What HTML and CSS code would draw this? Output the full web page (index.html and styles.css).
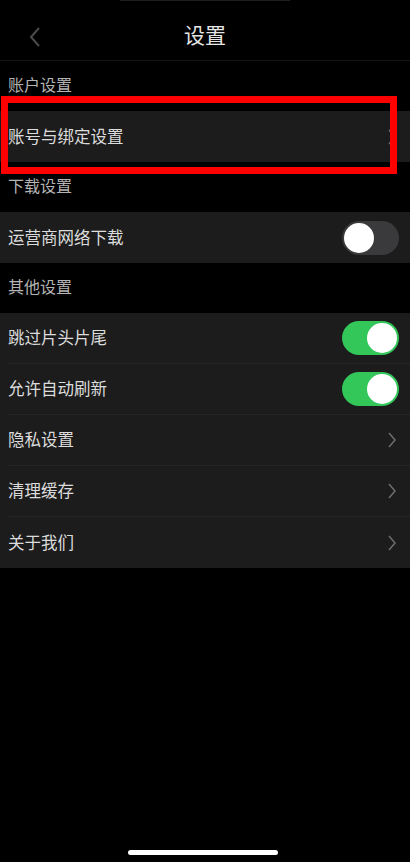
FILE: index.html
```html
<!DOCTYPE html>
<html lang="zh-CN">
<head>
    <meta charset="UTF-8">
    <meta name="viewport" content="width=device-width, initial-scale=1.0">
    <title>设置</title>
    <link rel="stylesheet" href="styles.css">
</head>
<body>
    <div class="notch-line"></div>

    <div class="nav-bar">
        <svg class="back" width="12" height="20" viewBox="0 0 12 20">
            <path d="M10 1 L2 10 L10 19" fill="none" stroke="#4a4a4a" stroke-width="2"/>
        </svg>
        <div class="nav-title">设置</div>
    </div>

    <div class="settings">
        <div class="section-title">账户设置</div>
        <div class="group">
            <div class="row">
                <span>账号与绑定设置</span>
                <svg class="chevron" width="10" height="16" viewBox="0 0 10 16"><path d="M2 1 L8 8 L2 15" fill="none" stroke="#6e6e6e" stroke-width="1.5"/></svg>
            </div>
        </div>

        <div class="section-title">下载设置</div>
        <div class="group">
            <div class="row">
                <span>运营商网络下载</span>
                <div class="switch"><div class="knob"></div></div>
            </div>
        </div>

        <div class="section-title">其他设置</div>
        <div class="group">
            <div class="row">
                <span>跳过片头片尾</span>
                <div class="switch on"><div class="knob"></div></div>
            </div>
            <div class="row">
                <span>允许自动刷新</span>
                <div class="switch on"><div class="knob"></div></div>
            </div>
            <div class="row">
                <span>隐私设置</span>
                <svg class="chevron" width="10" height="16" viewBox="0 0 10 16"><path d="M2 1 L8 8 L2 15" fill="none" stroke="#6e6e6e" stroke-width="1.5"/></svg>
            </div>
            <div class="row">
                <span>清理缓存</span>
                <svg class="chevron" width="10" height="16" viewBox="0 0 10 16"><path d="M2 1 L8 8 L2 15" fill="none" stroke="#6e6e6e" stroke-width="1.5"/></svg>
            </div>
            <div class="row">
                <span>关于我们</span>
                <svg class="chevron" width="10" height="16" viewBox="0 0 10 16"><path d="M2 1 L8 8 L2 15" fill="none" stroke="#6e6e6e" stroke-width="1.5"/></svg>
            </div>
        </div>

        <!-- annotation box drawn over the first row -->
        <div class="highlight"></div>
    </div>

    <div class="home-indicator"></div>
</body>
</html>
```

FILE: styles.css
```css
body { margin: 0; background: #000; font-family: "Noto Sans CJK SC", "Noto Sans", sans-serif; height: 862px; position: relative; overflow: hidden; }
.notch-line { width: 170px; height: 1px; margin: 0 auto; background: #1e1e1e; }
.nav-bar { height: 59px; border-bottom: 1px solid #141414; display: flex; align-items: center; justify-content: center; position: relative; }
.back { position: absolute; left: 29px; top: 26px; }
.nav-title { color: #e6e6e6; font-size: 21px; margin-top: 6px; }
.settings { position: relative; }
.section-title { height: 50px; box-sizing: border-box; padding: 12px 0 0 8px; color: #b4b4b4; font-size: 16px; line-height: 22px; }
.group { background: #1c1c1c; }
.row { height: 51px; margin-left: 8px; padding-right: 12px; display: flex; align-items: center; justify-content: space-between; color: #dcdcdc; font-size: 16.5px; border-bottom: 1px solid #262626; box-sizing: border-box; }
.row span { margin-top: -2px; }
.row:last-child { border-bottom: none; }
.chevron { margin-right: 1px; }
.switch { width: 57px; height: 34px; border-radius: 17px; background: #3a3a3c; position: relative; margin-right: -1px; }
.switch .knob { position: absolute; top: 2px; left: 2px; width: 30px; height: 30px; border-radius: 50%; background: #fff; }
.switch.on { background: #33c75a; }
.switch.on .knob { left: 25px; }
.highlight { position: absolute; left: 1px; top: 35px; width: 382px; height: 64px; border: 7px solid #ff0000; }
.home-indicator { position: absolute; left: 128px; top: 850px; width: 150px; height: 5px; border-radius: 3px; background: #fff; }
```
